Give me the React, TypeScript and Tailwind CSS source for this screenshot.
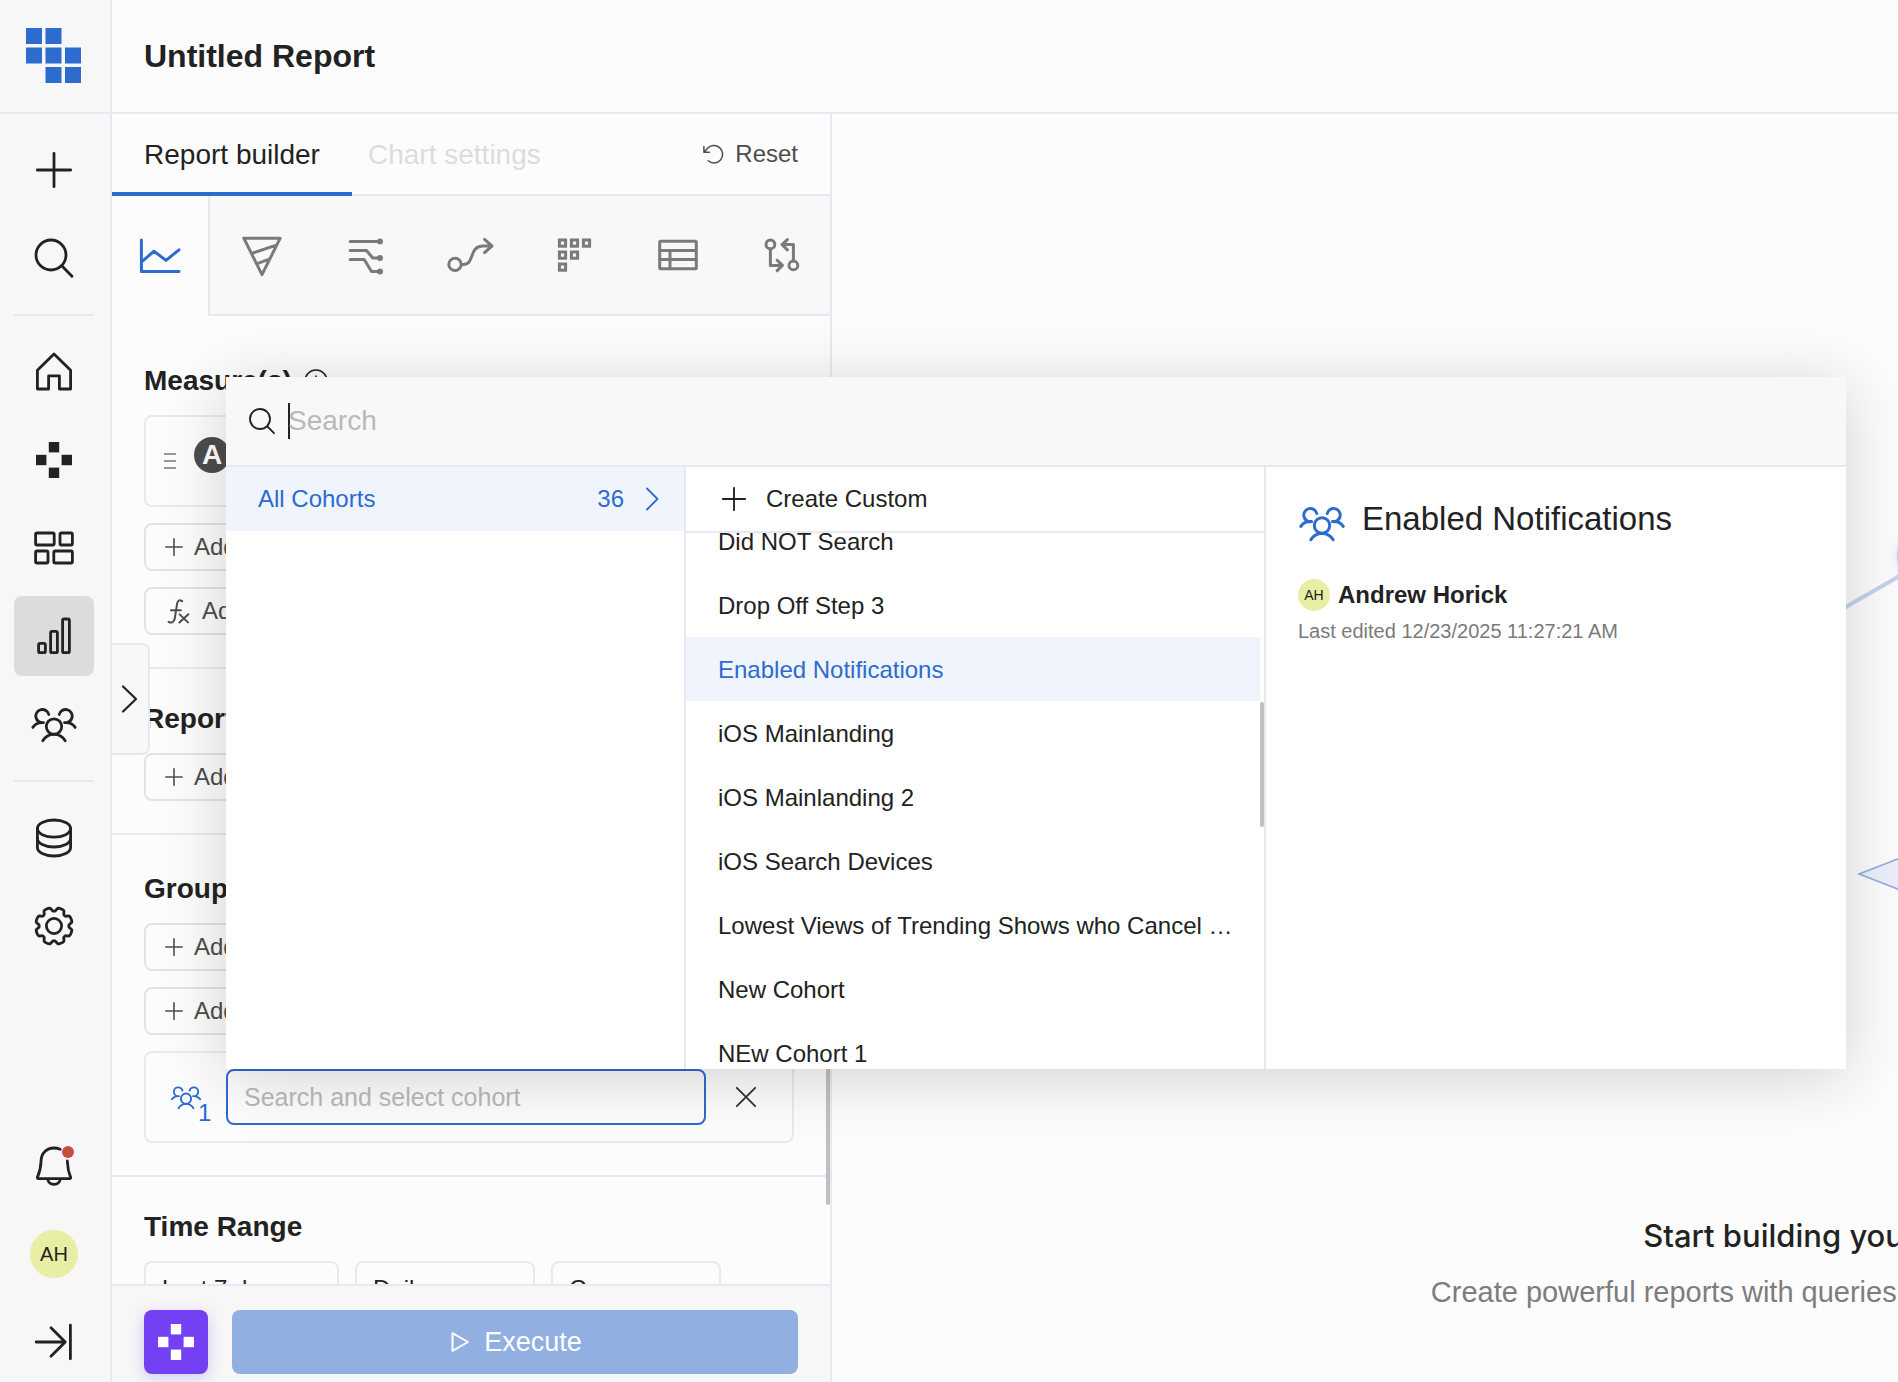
import React from 'react';

interface IconProps {
  className?: string;
  children: React.ReactNode;
  strokeWidth?: number;
}

const Icon: React.FC<IconProps> = ({ className = 'w-12 h-12', children, strokeWidth = 2.8 }) => (
  <svg
    className={`shrink-0 ${className}`}
    viewBox="0 0 48 48"
    fill="none"
    stroke="currentColor"
    strokeWidth={strokeWidth}
    strokeLinecap="round"
    strokeLinejoin="round"
    aria-hidden="true"
  >
    {children}
  </svg>
);

const PEOPLE = (
  <>
    <circle cx="24" cy="26.5" r="7.7" />
    <path d="M18.8 14.5A6.6 6.6 0 1 0 13.5 22.6H12C8 22.6 4.8 24.5 2.8 27.4" />
    <path d="M29.2 14.5A6.6 6.6 0 1 1 34.5 22.6H36C40 22.6 43.2 24.5 45.2 27.4" />
    <path d="M12.8 40.8C15 37 19 34.4 24 34.4S33 37 35.2 40.8" />
  </>
);

const CLUSTER = (
  <g fill="currentColor" stroke="none">
    <rect x="18.8" y="6" width="10.4" height="10.4" />
    <rect x="6" y="18.8" width="10.4" height="10.4" />
    <rect x="31.6" y="18.8" width="10.4" height="10.4" />
    <rect x="18.8" y="31.6" width="10.4" height="10.4" />
  </g>
);

// Eight rounded teeth, notches on the axes
const GEAR_PATH =
  Array.from({ length: 144 }, (_, i) => {
    const a = (i / 144) * Math.PI * 2;
    const r = 16.5 + 2 * Math.tanh(-2.2 * Math.cos(8 * a) + 0.9);
    return `${i ? 'L' : 'M'}${(24 + r * Math.cos(a)).toFixed(2)} ${(24 + r * Math.sin(a)).toFixed(2)}`;
  }).join('') + 'Z';

const ICONS = {
  plus: <path d="M24 7.3v33.4M7.3 24h33.4" />,
  search: (
    <>
      <circle cx="21" cy="21" r="15" />
      <path d="M32 32l10 10.3" />
    </>
  ),
  home: <path d="M7.4 22.2 24 6l16.6 16.2V41H29.4V27.8H18.6V41H7.4Z" />,
  cluster: CLUSTER,
  boards: (
    <>
      <rect x="5.6" y="9" width="18.6" height="12" rx="1.5" />
      <rect x="30" y="9" width="12.4" height="12" rx="1.5" />
      <rect x="5.6" y="27" width="12.4" height="12" rx="1.5" />
      <rect x="23.8" y="27" width="18.6" height="12" rx="1.5" />
    </>
  ),
  bars: (
    <>
      <rect x="8.6" y="31.3" width="6.8" height="9.4" rx="1.5" />
      <rect x="20.6" y="19.3" width="6.8" height="21.4" rx="1.5" />
      <rect x="32.6" y="7" width="6.8" height="33.7" rx="1.5" />
    </>
  ),
  people: PEOPLE,
  database: (
    <>
      <ellipse cx="24" cy="14.6" rx="16.6" ry="8.6" />
      <path d="M7.4 14.6v18.8c0 4.7 7.4 8.6 16.6 8.6s16.6-3.9 16.6-8.6V14.6" />
      <path d="M7.4 24.4c0 4.7 7.4 8.6 16.6 8.6s16.6-3.9 16.6-8.6" />
    </>
  ),
  gear: (
    <>
      <circle cx="24" cy="24" r="7.6" />
      <path d={GEAR_PATH} />
    </>
  ),
};

type IconName = keyof typeof ICONS;

const NAV_GROUPS: { id: IconName; label: string }[][] = [
  [
    { id: 'plus', label: 'Create' },
    { id: 'search', label: 'Search' },
  ],
  [
    { id: 'home', label: 'Home' },
    { id: 'cluster', label: 'Assistant' },
    { id: 'boards', label: 'Dashboards' },
    { id: 'bars', label: 'Reports' },
    { id: 'people', label: 'Cohorts' },
  ],
  [
    { id: 'database', label: 'Data' },
    { id: 'gear', label: 'Settings' },
  ],
];

const CHART_TYPES: { label: string; icon: React.ReactNode }[] = [
  {
    label: 'Funnel',
    icon: <path d="M5.8 7.2H42.2L24 43.6ZM15 22 38.3 14.2M19.8 32.4 31.5 28.2" />,
  },
  {
    label: 'Paths',
    icon: (
      <>
        <path d="M8.2 10.4H38M8.2 19.5H24.5L30.7 27H38M8.2 28.4H22.2L29.5 40.6H38" />
        <g fill="currentColor" stroke="none">
          <circle cx="38" cy="10.4" r="3" />
          <circle cx="38" cy="27" r="3" />
          <circle cx="38" cy="40.6" r="3" />
        </g>
      </>
    ),
  },
  {
    label: 'Journey',
    icon: (
      <>
        <circle cx="9" cy="33.4" r="6.2" />
        <path d="M15.6 33.4H17.5C29 33.4 22.5 15 37 15H45.5M38.5 8.4 46 15 38.5 21.6" />
      </>
    ),
  },
  {
    label: 'Retention',
    icon: (
      <g strokeLinejoin="miter">
        <rect x="9.4" y="9" width="6.2" height="6.2" />
        <rect x="21.4" y="9" width="6.2" height="6.2" />
        <rect x="33.4" y="9" width="6.2" height="6.2" />
        <rect x="9.4" y="21" width="6.2" height="6.2" />
        <rect x="21.4" y="21" width="6.2" height="6.2" />
        <rect x="9.4" y="33" width="6.2" height="6.2" />
      </g>
    ),
  },
  {
    label: 'Table',
    icon: (
      <>
        <rect x="5.7" y="10.3" width="36.6" height="27.4" rx="1" />
        <path d="M5.7 19.4H42.3M5.7 28.4H42.3M16 19.4V37.7" />
      </>
    ),
  },
  {
    label: 'Compare',
    icon: (
      <>
        <circle cx="12.4" cy="13.4" r="4.4" />
        <circle cx="35.4" cy="34.4" r="4.4" />
        <path d="M12.4 18V34.4H23.5M19.2 29.2 24.4 34.4 19.2 39.6" />
        <path d="M35.4 30V13.6H24.2M29.4 8.6 24 13.6 29.4 18.8" />
      </>
    ),
  },
];

const COHORTS = [
  'Did NOT Search',
  'Drop Off Step 3',
  'Enabled Notifications',
  'iOS Mainlanding',
  'iOS Mainlanding 2',
  'iOS Search Devices',
  'Lowest Views of Trending Shows who Cancel Subscription',
  'New Cohort',
  'NEw Cohort 1',
];

const Logo = () => (
  <svg className="w-14 h-14" viewBox="0 0 56 56" fill="#2d6bcf" aria-hidden="true">
    <rect x="0" y="0" width="16" height="16" />
    <rect x="19.5" y="0" width="16" height="16" />
    <rect x="0" y="19.5" width="16" height="16" />
    <rect x="19.5" y="19.5" width="16" height="16" />
    <rect x="39" y="19.5" width="16" height="16" />
    <rect x="19.5" y="39" width="16" height="16" />
    <rect x="39" y="39" width="16" height="16" />
  </svg>
);

const Sidebar = () => (
  <aside className="w-28 shrink-0 flex flex-col bg-[#f7f7f7] border-r-2 border-[#e8e8f0]">
    <div className="h-[114px] shrink-0 flex items-center pl-[26px] border-b-2 border-[#e8e8f0]">
      <a href="#" aria-label="Workspace home">
        <Logo />
      </a>
    </div>
    <nav className="flex flex-col pl-3.5 pt-4">
      {NAV_GROUPS.map((group, idx) => (
        <div
          key={idx}
          className={`w-20 flex flex-col gap-2 pb-4 ${idx < NAV_GROUPS.length - 1 ? 'border-b-2 border-[#e8e8f0] mb-4' : ''}`}
        >
          {group.map((item) => (
            <button
              key={item.id}
              aria-label={item.label}
              className={`w-20 h-20 flex items-center justify-center rounded-lg ${item.id === 'bars' ? 'bg-[#dcdcdc]' : ''}`}
            >
              <Icon>{ICONS[item.id]}</Icon>
            </button>
          ))}
        </div>
      ))}
    </nav>
    <div className="mt-auto pl-3.5 flex flex-col gap-2">
      <button aria-label="Notifications" className="w-20 h-20 flex items-center justify-center">
        <Icon>
          <path d="M30.2 7.2C28.3 6.4 26.3 6 24 6 16.6 6 11.4 11 11.1 18.5 10.9 26 10 29.5 7.4 35.4 7.1 36.2 7.6 36.6 8.4 36.6H39.6C40.4 36.6 40.9 36.2 40.6 35.4 38.4 30 37.6 26 37.3 19" />
          <path d="M17.8 37.4C18.3 40.5 20.8 42.3 24 42.3S29.7 40.5 30.2 37.4" />
          <circle cx="38" cy="10" r="6" fill="#c64d41" stroke="none" />
        </Icon>
      </button>
      <button aria-label="Account" className="w-20 h-20 flex items-center justify-center">
        <span className="w-12 h-12 rounded-full bg-[#e8eea4] flex items-center justify-center text-xl">AH</span>
      </button>
      <button aria-label="Expand sidebar" className="w-20 h-20 flex items-center justify-center">
        <Icon>
          <path d="M6.2 24H35M21 9.8 35.2 24 21 38.2M40.4 7.2V40.8" />
        </Icon>
      </button>
    </div>
  </aside>
);

const AddButton: React.FC<{ label: string; formula?: boolean }> = ({ label, formula }) => (
  <button className="h-12 self-start flex items-center gap-2 px-4 border-2 border-[#e3e3e3] rounded-lg text-2xl text-[#4d4d4d]">
    {formula ? (
      <svg className="w-8 h-8" viewBox="0 0 32 32" fill="none" stroke="currentColor" strokeWidth="2" strokeLinecap="round" aria-hidden="true">
        <path d="M20.3 6.2C17.6 4.2 15.6 5.6 15.1 8.6L12.8 23.4C12.3 27 9.4 28.6 6.6 26.8M9 15.2H18.8" />
        <path d="M17.6 19.4 26 27.4M26.4 19.2 17.4 27.6" />
      </svg>
    ) : (
      <svg className="w-6 h-6" viewBox="0 0 24 24" fill="none" stroke="currentColor" strokeWidth="1.6" strokeLinecap="round" aria-hidden="true">
        <path d="M12 3.8v16.4M3.8 12h16.4" />
      </svg>
    )}
    {label}
  </button>
);

const SectionTitle: React.FC<{ children: React.ReactNode }> = ({ children }) => (
  <h2 className="flex items-center gap-3 h-9 text-[28px] font-bold">{children}</h2>
);

const TIME_OPTIONS = [
  { label: 'Last 7 days', width: 'w-[195px]' },
  { label: 'Daily', width: 'w-[180px]' },
  { label: 'Compare', width: 'w-[170px]' },
];

const Builder = () => (
  <section className="w-[720px] shrink-0 flex flex-col border-r-2 border-[#e8e8f0]">
    <div className="h-[82px] shrink-0 flex items-stretch border-b-2 border-[#e8e8f0]">
      <button className="w-60 -mb-0.5 pt-1 text-[28px] border-b-4 border-[#2d6bcf]">Report builder</button>
      <button className="px-4 pt-0.5 text-[28px] text-[#dcdcdc]">Chart settings</button>
      <button className="ml-auto pr-8 flex items-center gap-2.5 text-2xl text-[#4d4d4d]">
        <svg className="w-6 h-6" viewBox="0 0 24 24" fill="none" stroke="currentColor" strokeWidth="1.5" strokeLinecap="round" strokeLinejoin="round" aria-hidden="true">
          <path d="M2.9 4.6V10.2H8.4M3.2 10 6.3 6.6A8.7 8.7 0 1 1 7.2 18.8" />
        </svg>
        Reset
      </button>
    </div>
    <div className="h-[120px] shrink-0 flex">
      <button aria-label="Line chart" className="w-24 shrink-0 flex items-center justify-center text-[#2d6bcf]">
        <Icon strokeWidth={3}>
          <path d="M5.4 8V39.4H43M6.8 28.8 18 19.2 30 28.4 43 17.8" />
        </Icon>
      </button>
      <div className="flex-1 min-w-0 flex bg-[#f8f8f8] border-l-2 border-b-2 border-[#e8e8f0]">
        {CHART_TYPES.map((type) => (
          <button key={type.label} aria-label={type.label} className="w-[104px] shrink-0 flex items-center justify-center text-[#7a7a7a]">
            <Icon strokeWidth={3}>{type.icon}</Icon>
          </button>
        ))}
      </div>
    </div>

    <div className="flex-1 min-h-0 overflow-hidden relative pr-1">
      <div className="px-8 pt-[47px] pb-8 flex flex-col gap-4 border-b-2 border-[#e8e8f0]">
        <SectionTitle>
          Measure(s)
          <svg className="w-6 h-6" viewBox="0 0 24 24" fill="none" stroke="currentColor" strokeWidth="1.6" aria-hidden="true">
            <circle cx="12" cy="12" r="11" />
            <path d="M12 6.5v1.8M12 10.5v7" />
          </svg>
        </SectionTitle>
        <div className="h-[92px] pl-4 flex items-center gap-4 border-2 border-[#e8e8f0] rounded-lg">
          <div className="w-4 flex flex-col items-center gap-[5px] text-[#999999]">
            <span className="w-3 h-0.5 bg-current" />
            <span className="w-3 h-0.5 bg-current" />
            <span className="w-3 h-0.5 bg-current" />
          </div>
          <span className="w-9 h-9 mb-3 rounded-full bg-[#4d4d4d] text-white text-[28px] font-bold flex items-center justify-center">A</span>
        </div>
        <AddButton label="Add Measure" />
        <AddButton label="Add Formula" formula />
      </div>
      <div className="px-8 py-8 flex flex-col gap-4 border-b-2 border-[#e8e8f0]">
        <SectionTitle>Report Filters</SectionTitle>
        <AddButton label="Add Filter" />
      </div>
      <div className="px-8 pt-9 pb-8 flex flex-col gap-4 border-b-2 border-[#e8e8f0]">
        <SectionTitle>Group By</SectionTitle>
        <AddButton label="Add Property" />
        <AddButton label="Add Cohort" />
        <div className="h-[92px] pl-6 pr-[34px] flex items-center border-2 border-[#e8e8f0] rounded-lg">
          <div className="relative w-14 h-14 shrink-0 flex items-center text-[#2d6bcf]">
            <Icon className="w-8 h-8">{PEOPLE}</Icon>
            <span className="absolute left-7 top-8 text-2xl leading-6">1</span>
          </div>
          <input
            type="text"
            aria-label="Cohort"
            placeholder="Search and select cohort"
            className="flex-1 min-w-0 h-14 px-4 text-[25px] bg-transparent border-2 border-[#2d6bcf] rounded-lg placeholder:text-[#b9b9b9]"
          />
          <button aria-label="Remove cohort" className="ml-7 text-[#333333]">
            <svg className="w-6 h-6" viewBox="0 0 24 24" fill="none" stroke="currentColor" strokeWidth="1.8" strokeLinecap="round" aria-hidden="true">
              <path d="M2.8 2.8 21.2 21.2M21.2 2.8 2.8 21.2" />
            </svg>
          </button>
        </div>
      </div>
      <div className="px-8 pt-8 flex flex-col gap-4">
        <SectionTitle>Time Range</SectionTitle>
        <div className="flex gap-4">
          {TIME_OPTIONS.map((option) => (
            <select
              key={option.label}
              aria-label={option.label}
              className={`${option.width} h-14 px-4 text-2xl appearance-none bg-transparent border-2 border-[#e8e8f0] rounded-lg`}
            >
              <option>{option.label}</option>
            </select>
          ))}
        </div>
      </div>
      <div className="absolute right-0 top-[600px] w-1 h-[289px] rounded-full bg-[#c0c0c0]" />
    </div>

    <div className="h-[98px] shrink-0 flex items-start gap-6 px-8 pt-6 bg-[#f7f7f7] border-t-2 border-[#e8e8f0]">
      <button aria-label="Ask assistant" className="w-16 h-16 flex items-center justify-center rounded-lg bg-[#7340f4] text-white shadow-[0_4px_16px_rgba(115,64,244,0.25)]">
        <Icon>{CLUSTER}</Icon>
      </button>
      <button className="flex-1 h-16 flex items-center justify-center gap-3 rounded-lg bg-[#92afe1] text-white text-[27px]">
        <svg className="w-6 h-6" viewBox="0 0 24 24" fill="none" stroke="currentColor" strokeWidth="2" strokeLinejoin="round" aria-hidden="true">
          <path d="M4.5 3.2V20.8L20 12Z" />
        </svg>
        Execute
      </button>
    </div>
  </section>
);

const Canvas = () => (
  <main className="relative flex-1 min-w-0 overflow-hidden flex">
    <svg className="absolute right-0 top-[386px]" width="120" height="400" viewBox="0 0 120 400" fill="none" aria-hidden="true">
      <defs>
        <filter id="glow" x="-50%" y="-50%" width="200%" height="200%">
          <feGaussianBlur stdDeviation="4" />
        </filter>
      </defs>
      <circle cx="150" cy="56" r="32" fill="#c3d2f0" opacity="0.6" filter="url(#glow)" />
      <path d="M20 134.6 124 74.6" stroke="#c3d2f0" strokeWidth="4" />
      <circle cx="150" cy="56" r="31" fill="#b7cbef" />
      <path d="M81 374 250 308V440Z" fill="#eaeff9" stroke="#8fade3" strokeWidth="1.6" />
    </svg>
    <div className="w-[1994px] shrink-0 flex flex-col items-center justify-end gap-4 pb-[70px] whitespace-nowrap">
      <h2 className="text-[31px] leading-10 font-medium font-['Inter',sans-serif]">Start building your report</h2>
      <p className="text-[29px] leading-10 text-[#7d7d7d]">Create powerful reports with queries, filters, and visualizations</p>
    </div>
  </main>
);

const CohortPicker = () => (
  <div className="absolute z-20 left-[226px] top-[377px] w-[1620px] h-[692px] flex flex-col bg-white shadow-[0_8px_60px_rgba(0,0,0,0.17)]">
    <div className="h-[90px] shrink-0 flex items-center pl-5 bg-[#f8f8f8] border-b-2 border-[#e8e8f0]">
      <Icon className="w-8 h-8">{ICONS.search}</Icon>
      <span className="w-0.5 h-9 ml-2.5 -mr-0.5 bg-[#222222]" />
      <input type="text" aria-label="Search cohorts" placeholder="Search" className="flex-1 text-[28px] bg-transparent outline-none placeholder:text-[#b9b9b9]" />
    </div>
    <div className="flex-1 min-h-0 grid grid-cols-[460px_1fr_1fr] text-2xl">
      <div className="border-r-2 border-[#e8e8f0]">
        <button className="w-full h-16 flex items-center pl-8 pr-5 bg-[#f0f4fc] text-[#2d6bcf]">
          <span>All Cohorts</span>
          <span className="ml-auto mr-4">36</span>
          <svg className="w-6 h-6" viewBox="0 0 24 24" fill="none" stroke="currentColor" strokeWidth="1.8" strokeLinecap="round" strokeLinejoin="round" aria-hidden="true">
            <path d="M7 1.5 17.5 12 7 22.5" />
          </svg>
        </button>
      </div>
      <div className="min-w-0 min-h-0 flex flex-col border-r-2 border-[#e8e8f0]">
        <button className="h-[66px] shrink-0 flex items-center gap-4 pl-8 border-b-2 border-[#e8e8f0]">
          <Icon className="w-8 h-8">{ICONS.plus}</Icon>
          Create Custom
        </button>
        <div className="relative flex-1 min-h-0 overflow-hidden pr-1">
          <ul className="-mt-6">
            {COHORTS.map((cohort) => (
              <li key={cohort}>
                <button
                  className={`w-full h-16 pl-8 pr-6 pt-0.5 text-left truncate ${cohort === 'Enabled Notifications' ? 'bg-[#f0f4fc] text-[#2d6bcf]' : ''}`}
                >
                  {cohort}
                </button>
              </li>
            ))}
          </ul>
          <div className="absolute right-0 top-[169px] w-1 h-[125px] rounded-full bg-[#c0c0c0]" />
        </div>
      </div>
      <div className="px-8 pt-8">
        <div className="flex items-center gap-4">
          <Icon className="w-12 h-12 text-[#2d6bcf]" strokeWidth={3}>
            {PEOPLE}
          </Icon>
          <h3 className="text-[33px] leading-10 pb-2">Enabled Notifications</h3>
        </div>
        <div className="mt-8 flex items-center gap-2">
          <span className="w-8 h-8 rounded-full bg-[#e8eea4] flex items-center justify-center text-sm">AH</span>
          <span className="text-2xl font-bold">Andrew Horick</span>
        </div>
        <p className="mt-1.5 text-xl text-[#7a7a7a]">Last edited 12/23/2025 11:27:21 AM</p>
      </div>
    </div>
  </div>
);

export default function App() {
  return (
    <div className="relative h-screen overflow-hidden flex bg-[#fcfcfc] text-[#222222] font-['Liberation_Sans',Arial,sans-serif]">
      <Sidebar />
      <div className="flex-1 min-w-0 flex flex-col">
        <header className="h-[114px] shrink-0 flex items-center px-8 border-b-2 border-[#e8e8f0]">
          <h1 className="text-[32px] font-bold">Untitled Report</h1>
        </header>
        <div className="flex-1 min-h-0 flex">
          <Builder />
          <Canvas />
        </div>
      </div>
      <button
        aria-label="Expand panel"
        className="absolute z-10 left-28 top-[643px] w-[38px] h-28 flex items-center justify-center bg-[#f8f8f8] border-2 border-l-0 border-[#e8e8f0] rounded-r-lg"
      >
        <svg className="w-8 h-8" viewBox="0 0 32 32" fill="none" stroke="currentColor" strokeWidth="2.2" strokeLinecap="round" strokeLinejoin="round" aria-hidden="true">
          <path d="M9 3.5 22 16 9 28.5" />
        </svg>
      </button>
      <CohortPicker />
    </div>
  );
}
